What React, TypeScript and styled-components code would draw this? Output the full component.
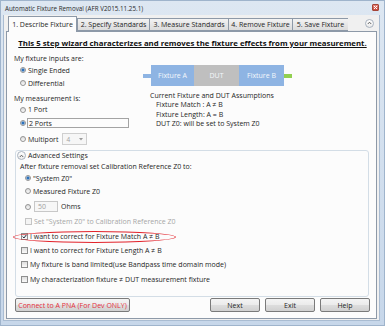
import React from "react";
import styled, { createGlobalStyle } from "styled-components";

const GlobalStyle = createGlobalStyle`
  html, body {
    margin: 0;
    padding: 0;
    background: #ffffff;
  }
  body {
    font-family: "Open Sans", "Noto Sans", "Liberation Sans", sans-serif;
    font-size: 7px;
    color: #1e1e1e;
  }
  * {
    box-sizing: border-box;
  }
`;

const Window = styled.div`
  width: 385px;
  height: 326px;
  display: flex;
  flex-direction: column;
  background: linear-gradient(#dde7f2, #c7d7ea);
  border: 1px solid #9fb4cc;
`;

const TitleBar = styled.div`
  height: 14px;
  display: flex;
  align-items: center;
  justify-content: space-between;
  padding: 0 5px 0 4px;
`;

const TitleText = styled.span`
  font-size: 6.3px;
  color: #2a2a2a;
`;

const CloseButton = styled.div`
  width: 7px;
  height: 7px;
  margin-top: -1px;
  border-radius: 1px;
  background: linear-gradient(#e8887c, #c9483a);
  border: 1px solid #a54437;
  display: flex;
  align-items: center;
  justify-content: center;
`;

const Body = styled.div`
  flex: 1;
  display: flex;
  flex-direction: column;
  margin: 0 4px 4px 2px;
  padding: 0 2px 1px 2px;
  background: #f0f0f0;
  border: 1px solid #a9bcd2;
  border-top: none;
`;

const TabStrip = styled.div`
  height: 16px;
  display: flex;
  align-items: flex-end;
  padding-left: 2px;
`;

const Tab = styled.div<{ $active?: boolean; $w: number }>`
  width: ${(p) => p.$w}px;
  height: ${(p) => (p.$active ? 16 : 13)}px;
  margin-bottom: ${(p) => (p.$active ? -1 : 0)}px;
  position: relative;
  z-index: ${(p) => (p.$active ? 1 : 0)};
  display: flex;
  align-items: center;
  justify-content: center;
  padding-bottom: ${(p) => (p.$active ? 1 : 0)}px;
  border: 1px solid #8d99a8;
  border-bottom: ${(p) => (p.$active ? "none" : "1px solid #8d99a8")};
  border-right: ${(p) => (p.$active ? "1px solid #8d99a8" : "none")};
  background: ${(p) =>
    p.$active ? "#fcfcfc" : "linear-gradient(#f3f3f3, #e4e4e4 60%, #dcdcdc)"};
  font-size: 7px;
  white-space: nowrap;
`;

const CollapseCircle = styled.span<{ $mr?: number }>`
  width: 9px;
  height: 9px;
  flex: none;
  margin: 0 ${(p) => p.$mr ?? 0}px 0 ${(p) => (p.$mr ? "auto" : "0")};
  border-radius: 50%;
  border: 1px solid #a9b3bf;
  background: linear-gradient(#ffffff, #eaeaea);
  display: flex;
  align-items: center;
  justify-content: center;
  align-self: center;
`;

const Panel = styled.div`
  flex: 1;
  display: flex;
  flex-direction: column;
  border: 1px solid #8d99a8;
  background: #fcfcfc;
  padding: 0 6px 0 0;
`;

const Heading = styled.div`
  margin-top: 5px;
  height: 12px;
  line-height: 12px;
  text-align: center;
  font-weight: 700;
  font-size: 7.8px;
  text-decoration: underline;
  white-space: nowrap;
  color: #111;
  padding-left: 8px;
`;

const TopArea = styled.div`
  display: flex;
`;

const LeftCol = styled.div`
  width: 136px;
  display: flex;
  flex-direction: column;
`;

const Row = styled.div<{ $mt?: number; $h?: number; $indent?: number }>`
  display: flex;
  align-items: center;
  height: ${(p) => p.$h ?? 12}px;
  margin-top: ${(p) => p.$mt ?? 0}px;
  padding-left: ${(p) => p.$indent ?? 0}px;
  white-space: nowrap;
  position: relative;
`;

const Label = styled.span<{ $disabled?: boolean; $gap?: number }>`
  margin-left: ${(p) => p.$gap ?? 0}px;
  color: ${(p) => (p.$disabled ? "#a6a6a6" : "#1e1e1e")};
`;

const Radio = styled.span<{ $checked?: boolean }>`
  width: 6px;
  height: 6px;
  flex: none;
  border-radius: 50%;
  border: 1px solid #939393;
  background: ${(p) =>
    p.$checked
      ? "radial-gradient(circle, #1d5fa8 0, #3d80c8 1.3px, #dfe8f2 1.9px, #f4f4f4 3px)"
      : "linear-gradient(#dcdcdc, #fbfbfb)"};
`;

const Check = styled.span<{ $disabled?: boolean }>`
  width: 7px;
  height: 7px;
  flex: none;
  border: 1px solid ${(p) => (p.$disabled ? "#c4c4c4" : "#8e8f8f")};
  background: ${(p) =>
    p.$disabled ? "#f4f4f4" : "linear-gradient(#dedede, #fafafa)"};
  display: flex;
  align-items: center;
  justify-content: center;
`;

const FocusBox = styled.span`
  display: flex;
  align-items: center;
  width: 102px;
  height: 10px;
  margin-left: 1px;
  padding-left: 1px;
  border: 1px solid #a3a3a3;
`;

const Select = styled.span`
  width: 25px;
  height: 12px;
  margin-left: 4px;
  border: 1px solid #cfcfcf;
  background: #f6f6f6;
  display: flex;
  align-items: center;
  justify-content: space-between;
  padding: 0 3px 0 3px;
  color: #a0a0a0;
  font-size: 6.5px;
`;

const TextInput = styled.span`
  width: 24px;
  height: 11px;
  margin-left: 3px;
  border: 1px solid #c8c8c8;
  background: #f7f7f7;
  display: flex;
  align-items: center;
  padding-left: 3px;
  color: #a0a0a0;
`;

const DiagramCol = styled.div`
  padding-top: 16px;
  display: flex;
  flex-direction: column;
`;

const Diagram = styled.div`
  display: flex;
  align-items: center;
`;

const Stub = styled.div<{ $color: string }>`
  width: 8px;
  height: 4px;
  background: ${(p) => p.$color};
`;

const Block = styled.div<{ $color: string; $w: number }>`
  width: ${(p) => p.$w}px;
  height: 21px;
  background: ${(p) => p.$color};
  color: #f4f8fc;
  display: flex;
  align-items: center;
  justify-content: center;
  font-size: 7px;
`;

const Assumptions = styled.div`
  margin-top: 5px;
  padding-left: 7px;
  line-height: 9.3px;
  white-space: nowrap;
`;

const Indent = styled.div`
  padding-left: 6px;
`;

const Group = styled.div`
  margin: 5px 1px 0 8px;
  border: 1px solid #d3dde6;
  border-radius: 3px;
  padding-bottom: 11px;
  display: flex;
  flex-direction: column;
`;

const Ellipse = styled.div`
  position: absolute;
  left: -3px;
  top: 1px;
  width: 163px;
  height: 12px;
  border: 1.2px solid #e2232b;
  border-radius: 50%;
  pointer-events: none;
`;

const ButtonRow = styled.div`
  margin-top: 1px;
  display: flex;
  align-items: center;
  padding-left: 8px;
`;

const Button = styled.div<{ $w: number; $danger?: boolean }>`
  width: ${(p) => p.$w}px;
  height: 14px;
  border: 1px solid #7a7a7a;
  border-radius: 2px;
  background: linear-gradient(#f4f4f4, #ebebeb 50%, #dddddd 51%, #d0d0d0);
  display: flex;
  align-items: center;
  justify-content: center;
  color: ${(p) => (p.$danger ? "#e3303c" : "#1e1e1e")};
  font-size: 7px;
  white-space: nowrap;
  & + & {
    margin-left: 5px;
  }
`;

const Spacer = styled.div`
  flex: 1;
`;

const Chevron = () => (
  <svg width="5" height="4" viewBox="0 0 5 4">
    <path d="M0.8 3 L2.5 1.2 L4.2 3" stroke="#555" strokeWidth="0.9" fill="none" />
  </svg>
);

const CheckMark = () => (
  <svg width="5" height="5" viewBox="0 0 5 5">
    <path d="M0.6 2.6 L2 4 L4.4 0.8" stroke="#27364a" strokeWidth="1" fill="none" />
  </svg>
);

const tabs = [
  { label: "1. Describe Fixture", w: 69 },
  { label: "2. Specify Standards", w: 72 },
  { label: "3. Measure Standards", w: 79 },
  { label: "4. Remove Fixture", w: 64 },
  { label: "5. Save Fixture", w: 56 },
];

export default function App() {
  return (
    <>
      <GlobalStyle />
      <Window>
        <TitleBar>
          <TitleText>Automatic Fixture Removal (AFR V2015.11.25.1)</TitleText>
          <CloseButton>
            <svg width="5" height="5" viewBox="0 0 5 5">
              <path d="M1 1 L4 4 M4 1 L1 4" stroke="#fff" strokeWidth="1" />
            </svg>
          </CloseButton>
        </TitleBar>
        <Body>
          <TabStrip>
            {tabs.map((t, i) => (
              <Tab key={t.label} $w={t.w} $active={i === 0}>
                {t.label}
              </Tab>
            ))}
            <CollapseCircle $mr={3}>
              <Chevron />
            </CollapseCircle>
          </TabStrip>
          <Panel>
            <Heading>
              This 5 step wizard characterizes and removes the fixture effects from your measurement.
            </Heading>
            <TopArea>
              <LeftCol>
                <Row $mt={3} $indent={7}>
                  <Label>My fixture inputs are:</Label>
                </Row>
                <Row $indent={13}>
                  <Radio $checked />
                  <Label $gap={2}>Single Ended</Label>
                </Row>
                <Row $mt={1} $indent={13}>
                  <Radio />
                  <Label $gap={2}>Differential</Label>
                </Row>
                <Row $mt={3} $indent={7}>
                  <Label>My measurement is:</Label>
                </Row>
                <Row $h={11} $indent={13}>
                  <Radio />
                  <Label $gap={2}>1 Port</Label>
                </Row>
                <Row $mt={2} $indent={13}>
                  <Radio $checked />
                  <FocusBox>2 Ports</FocusBox>
                </Row>
                <Row $mt={4} $indent={13}>
                  <Radio />
                  <Label $gap={2}>Multiport</Label>
                  <Select>
                    <span>4</span>
                    <svg width="4" height="3" viewBox="0 0 4 3">
                      <path d="M0 0 L4 0 L2 2.5 Z" fill="#9a9a9a" />
                    </svg>
                  </Select>
                </Row>
              </LeftCol>
              <DiagramCol>
                <Diagram>
                  <Stub $color="#8eb4e3" />
                  <Block $color="#8eb4e3" $w={43}>Fixture A</Block>
                  <Block $color="#bfbfbf" $w={45}>DUT</Block>
                  <Block $color="#8eb4e3" $w={45}>Fixture B</Block>
                  <Stub $color="#92d050" />
                </Diagram>
                <Assumptions>
                  <div>Current Fixture and DUT Assumptions</div>
                  <Indent>Fixture Match : A ≠ B</Indent>
                  <Indent>Fixture Length: A = B</Indent>
                  <Indent>DUT Z0: will be set to System Z0</Indent>
                </Assumptions>
              </DiagramCol>
            </TopArea>
            <Group>
              <Row $h={9} $indent={1}>
                <CollapseCircle>
                  <Chevron />
                </CollapseCircle>
                <Label $gap={2}>Advanced Settings</Label>
              </Row>
              <Row $indent={4}>
                <Label>After fixture removal set Calibration Reference Z0 to:</Label>
              </Row>
              <Row $indent={9}>
                <Radio $checked />
                <Label $gap={2}>"System Z0"</Label>
              </Row>
              <Row $mt={1} $indent={9}>
                <Radio />
                <Label $gap={2}>Measured Fixture Z0</Label>
              </Row>
              <Row $mt={3} $h={13} $indent={9}>
                <Radio />
                <TextInput>50</TextInput>
                <Label $gap={3}>Ohms</Label>
              </Row>
              <Row $mt={2} $indent={9}>
                <Check $disabled />
                <Label $gap={2} $disabled>
                  Set "System Z0" to Calibration Reference Z0
                </Label>
              </Row>
              <Row $mt={3} $indent={5}>
                <Check>
                  <CheckMark />
                </Check>
                <Label $gap={2}>I want to correct for Fixture Match A ≠ B</Label>
                <Ellipse />
              </Row>
              <Row $mt={2} $indent={5}>
                <Check />
                <Label $gap={2}>I want to correct for Fixture Length A ≠ B</Label>
              </Row>
              <Row $mt={2} $indent={5}>
                <Check />
                <Label $gap={2}>My fixture is band limited(use Bandpass time domain mode)</Label>
              </Row>
              <Row $mt={3} $indent={5}>
                <Check />
                <Label $gap={2}>My characterization fixture ≠ DUT measurement fixture</Label>
              </Row>
            </Group>
            <ButtonRow>
              <Button $w={115} $danger>
                Connect to A PNA (For Dev ONLY)
              </Button>
              <Spacer />
              <Button $w={50}>Next</Button>
              <Button $w={50}>Exit</Button>
              <Button $w={50}>Help</Button>
            </ButtonRow>
          </Panel>
        </Body>
      </Window>
    </>
  );
}
